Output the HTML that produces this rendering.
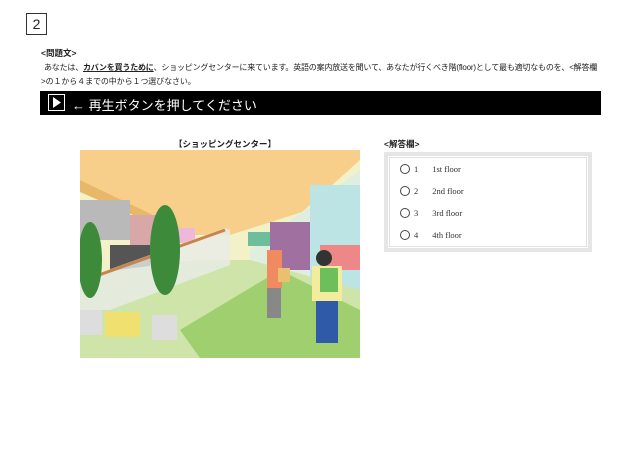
<!DOCTYPE html>
<html><head><meta charset="utf-8"><style>
body{margin:0;width:640px;height:453px;background:#fff;font-family:"Liberation Sans","Noto Sans CJK JP",sans-serif;position:relative;overflow:hidden;color:#222}
.a{position:absolute}
.num{left:26px;top:13px;width:19px;height:20px;border:1px solid #333;font-size:14px;text-align:center;line-height:20px}
.t{font-size:8.5px;white-space:nowrap}
.bar{left:40px;top:91px;width:561px;height:24px;background:#000;color:#fff;font-size:13px}
.play{left:8px;top:3px;width:15px;height:15px;border:1.5px solid #fff;background:#000}
.opt{position:absolute;left:10px;font-size:8.5px;font-family:"Liberation Serif",serif;color:#333}
.opt i{display:inline-block;width:8px;height:8px;border:1px solid #444;border-radius:50%;vertical-align:-2px;margin-right:4px}
</style></head><body>
<div class="a num">2</div>
<div class="a t" style="left:41px;top:47px;font-weight:bold">&lt;問題文&gt;</div>
<div class="a t" style="left:44px;top:62px;font-size:8px;letter-spacing:-0.2px">あなたは、<b><u>カバンを買うために</u></b>、ショッピングセンターに来ています。英語の案内放送を聞いて、あなたが行くべき階(floor)として最も適切なものを、&lt;解答欄</div>
<div class="a t" style="left:41px;top:76px;font-size:8px;letter-spacing:-0.1px">&gt;の１から４までの中から１つ選びなさい。</div>
<div class="a bar"><div class="a play"><svg width="15" height="15" style="position:absolute;left:0;top:0"><polygon points="4,2 12,7.5 4,13" fill="#fff"/></svg></div><span class="a" style="left:32px;top:4px">← 再生ボタンを押してください</span></div>
<div class="a t" style="left:174px;top:138px;font-weight:bold">【ショッピングセンター】</div>
<svg class="a" style="left:80px;top:150px" width="280" height="208" viewBox="0 0 280 208">
<rect width="280" height="208" fill="#f3f1c8"/>
<polygon points="0,0 280,0 280,10 222,62 150,85 115,85 0,30" fill="#f8cf8a"/>
<polygon points="0,30 115,85 115,92 0,42" fill="#e8b86a"/>
<rect x="0" y="50" width="50" height="40" fill="#b9b9b9"/>
<rect x="50" y="65" width="40" height="30" fill="#d8a8a8"/>
<rect x="90" y="78" width="25" height="15" fill="#f0b8d8"/>
<rect x="30" y="95" width="40" height="40" fill="#555"/>
<polygon points="170,100 280,20 280,208 170,208" fill="#e0eee0"/>
<rect x="168" y="82" width="22" height="14" fill="#6cbf9a"/>
<rect x="190" y="72" width="40" height="48" fill="#a070a0"/>
<rect x="230" y="35" width="50" height="120" fill="#bde4e4"/>
<rect x="240" y="95" width="40" height="25" fill="#e88"/>
<polygon points="0,125 115,110 170,110 280,140 280,208 0,208" fill="#cfe4a8"/>
<polygon points="100,180 200,120 280,160 280,208 120,208" fill="#9fcf6f"/>
<polygon points="0,130 145,78 150,80 150,115 30,160 0,160" fill="#e8ece8" opacity=".8"/>
<line x1="5" y1="130" x2="145" y2="80" stroke="#c8844a" stroke-width="3"/>
<ellipse cx="10" cy="110" rx="12" ry="38" fill="#3c8a3a"/>
<rect x="0" y="160" width="22" height="25" fill="#ddd"/>
<ellipse cx="85" cy="100" rx="15" ry="45" fill="#3c8a3a"/>
<rect x="72" y="165" width="25" height="25" fill="#ddd"/>
<rect x="25" y="162" width="35" height="25" fill="#f0e070"/>
<rect x="187" y="100" width="15" height="38" fill="#f08a60"/>
<rect x="187" y="138" width="14" height="30" fill="#888"/>
<rect x="198" y="118" width="12" height="14" fill="#e8c070"/>
<circle cx="244" cy="108" r="8" fill="#333"/>
<rect x="232" y="116" width="30" height="35" fill="#f2ec9c"/>
<rect x="240" y="118" width="18" height="24" fill="#6cbf5a"/>
<rect x="236" y="151" width="22" height="42" fill="#2e5aa8"/>
</svg>
<div class="a t" style="left:384px;top:138px;font-weight:bold">&lt;解答欄&gt;</div>
<div class="a" style="left:384px;top:152px;width:200px;height:92px;border:4px solid #e6e6e6;background:#fff">
<div class="a" style="left:1px;top:1px;width:196px;height:88px;border:1px solid #e0e0e0">
<div class="opt" style="top:6px"><i></i>1<span style="margin-left:14px">1st floor</span></div>
<div class="opt" style="top:28px"><i></i>2<span style="margin-left:14px">2nd floor</span></div>
<div class="opt" style="top:50px"><i></i>3<span style="margin-left:14px">3rd floor</span></div>
<div class="opt" style="top:72px"><i></i>4<span style="margin-left:14px">4th floor</span></div>
</div></div>
</body></html>
